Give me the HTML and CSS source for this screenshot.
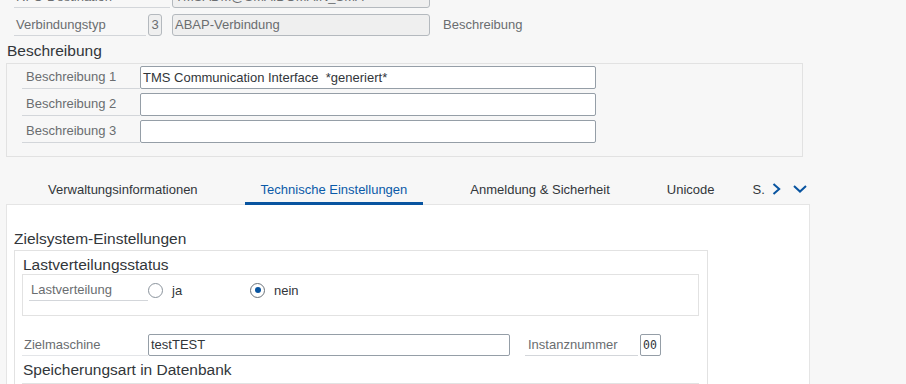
FILE: index.html
```html
<!DOCTYPE html>
<html lang="de">
<head>
<meta charset="utf-8">
<title>RFC-Destination</title>
<link rel="stylesheet" href="styles.css">
</head>
<body>
<div class="page">
  <div class="head-form">
    <div class="hrow">
      <span class="hlabel hlabel-wide">RFC-Destination</span>
      <span class="field field-ro field-dest">TMSADM@SMA.DOMAIN_SMA</span>
    </div>
    <div class="hrow">
      <span class="hlabel">Verbindungstyp</span>
      <span class="field field-ro field-code">3</span>
      <span class="field field-ro field-type">ABAP-Verbindung</span>
      <span class="hnote">Beschreibung</span>
    </div>
  </div>

  <h2 class="sec-title">Beschreibung</h2>
  <div class="desc-box">
    <div class="drow">
      <span class="dlabel">Beschreibung 1</span>
      <span class="field field-desc">TMS Communication Interface&nbsp; *generiert*</span>
    </div>
    <div class="drow">
      <span class="dlabel">Beschreibung 2</span>
      <span class="field field-desc"></span>
    </div>
    <div class="drow">
      <span class="dlabel">Beschreibung 3</span>
      <span class="field field-desc"></span>
    </div>
  </div>

  <div class="tabs">
    <span class="tab">Verwaltungsinformationen</span>
    <span class="tab tab-active">Technische Einstellungen</span>
    <span class="tab">Anmeldung &amp; Sicherheit</span>
    <span class="tab tab-near">Unicode</span>
    <span class="tab tab-clip">S.</span>
    <svg class="icon-next" width="9" height="12" viewBox="0 0 9 12"><path d="M1.5 1 L7.2 6 L1.5 11" fill="none" stroke="#0854a0" stroke-width="2"/></svg>
    <svg class="icon-more" width="14" height="8" viewBox="0 0 14 8"><path d="M1 1 L7 6.6 L13 1" fill="none" stroke="#0854a0" stroke-width="2"/></svg>
  </div>

  <div class="panel">
    <h3 class="panel-title">Zielsystem-Einstellungen</h3>
    <div class="group">
      <h4 class="group-title">Lastverteilungsstatus</h4>
      <div class="subbox">
        <div class="radio-row">
          <span class="rlabel">Lastverteilung</span>
          <span class="radio-opt"><span class="radio"></span>ja</span>
          <span class="radio-opt"><span class="radio radio-on"><span class="dot"></span></span>nein</span>
        </div>
      </div>
      <div class="host-row">
        <span class="zlabel">Zielmaschine</span>
        <span class="field field-host">testTEST</span>
        <span class="ilabel">Instanznummer</span>
        <span class="field field-inst">00</span>
      </div>
      <h4 class="group-title group-title-2">Speicherungsart in Datenbank</h4>
      <div class="subbox subbox-empty"></div>
    </div>
  </div>
</div>
</body>
</html>
```

FILE: styles.css
```css
html, body {
  margin: 0;
  padding: 0;
  background: #f7f7f7;
  overflow: hidden;
}

body {
  font-family: "Liberation Sans", Arial, sans-serif;
  font-size: 13px;
  color: #32363a;
}

.page {
  padding-left: 6px;
}

/* header form */
.head-form {
  margin-top: -14px;
  padding-left: 8px;
  display: flex;
  flex-direction: column;
  gap: 6px;
}

.hrow {
  display: flex;
  align-items: flex-start;
  height: 22px;
}

.hlabel {
  box-sizing: border-box;
  width: 132px;
  height: 22px;
  line-height: 21px;
  padding-left: 2px;
  color: #6a6d70;
  border-bottom: 1px solid #d3d6da;
  margin-right: 2px;
  white-space: nowrap;
}

.hlabel-wide {
  width: 156px;
}

.field {
  box-sizing: border-box;
  display: block;
  height: 22px;
  line-height: 20px;
  border: 1px solid #959ea7;
  border-radius: 2px;
  background: #fff;
  color: #32363a;
  padding-left: 2px;
  white-space: nowrap;
  overflow: hidden;
}

.field-ro {
  background: #efefef;
  border-color: #b4b9be;
  color: #6a6d70;
  border-radius: 3px;
}

.field-dest {
  width: 258px;
}

.field-code {
  width: 14px;
  padding-left: 0;
  text-align: center;
  margin-right: 10px;
}

.field-type {
  width: 258px;
  margin-right: 13px;
}

.hnote {
  line-height: 22px;
  color: #6a6d70;
}

/* Beschreibung */
.sec-title {
  margin: 6px 0 3px 1px;
  font-size: 15.5px;
  line-height: 18px;
  font-weight: normal;
  color: #32363a;
}

.desc-box {
  box-sizing: border-box;
  width: 797px;
  border: 1px solid #e2e2e2;
  padding: 2px 0 13px 15px;
  display: flex;
  flex-direction: column;
  gap: 4px;
}

.drow {
  display: flex;
  align-items: flex-start;
}

.dlabel {
  box-sizing: border-box;
  width: 118px;
  height: 23px;
  line-height: 22px;
  padding-left: 4px;
  color: #6a6d70;
  border-bottom: 1px solid #d3d6da;
}

.field-desc {
  width: 456px;
  height: 23px;
  line-height: 21px;
  padding-left: 2px;
}

/* tabs */
.tabs {
  position: relative;
  z-index: 1;
  display: flex;
  align-items: flex-start;
  margin-top: 25px;
  margin-bottom: -1px;
  padding-left: 26px;
}

.tab {
  padding: 0 16px 4px;
  line-height: 16px;
  border-bottom: 3px solid transparent;
  color: #32363a;
  white-space: nowrap;
}

.tab + .tab {
  margin-left: 31px;
}

.tabs .tab-near {
  margin-left: 25px;
}

.tab-active {
  color: #0a5aa8;
  border-bottom-color: #0854a0;
}

.tabs .tab-clip {
  margin-left: 22px;
  padding: 0 0 4px;
}

.icon-next {
  margin-left: 7px;
  margin-top: 1px;
}

.icon-more {
  margin-left: 12px;
  margin-top: 3px;
}

/* panel */
.panel {
  box-sizing: border-box;
  width: 804px;
  min-height: 240px;
  background: #fff;
  border: 1px solid #e5e5e5;
  padding: 25px 0 0 7px;
}

.panel-title {
  margin: 0 0 2px;
  font-size: 15.5px;
  line-height: 18px;
  font-weight: normal;
  color: #32363a;
}

.group {
  box-sizing: border-box;
  width: 694px;
  min-height: 160px;
  border: 1px solid #e2e2e2;
  padding: 5px 8px 0 7px;
}

.group-title {
  margin: 0;
  padding-left: 1px;
  font-size: 15.5px;
  line-height: 18px;
  font-weight: normal;
  color: #32363a;
}

.group-title-2 {
  margin: 5px 0 4px;
}

.subbox {
  border: 1px solid #e2e2e2;
  padding: 4px 0 14px 6px;
}

.subbox-empty {
  height: 40px;
}

.radio-row {
  display: flex;
  align-items: center;
}

.rlabel {
  box-sizing: border-box;
  width: 119px;
  height: 22px;
  line-height: 21px;
  padding-left: 2px;
  color: #6a6d70;
  border-bottom: 1px solid #d3d6da;
}

.radio-opt {
  display: inline-flex;
  align-items: center;
  gap: 9px;
  width: 102px;
  color: #32363a;
}

.radio {
  box-sizing: border-box;
  width: 15px;
  height: 15px;
  border: 1px solid #8a939c;
  border-radius: 50%;
  background: #fff;
  display: inline-flex;
  align-items: center;
  justify-content: center;
}

.radio-on {
  border-color: #6a7279;
}

.dot {
  width: 6px;
  height: 6px;
  border-radius: 50%;
  background: #0854a0;
}

.host-row {
  display: flex;
  align-items: flex-start;
  margin-top: 18px;
}

.zlabel {
  box-sizing: border-box;
  width: 126px;
  height: 22px;
  line-height: 21px;
  padding-left: 2px;
  color: #6a6d70;
  border-bottom: 1px solid #e3e5e8;
}

.field-host {
  width: 362px;
  margin-right: 15px;
}

.ilabel {
  box-sizing: border-box;
  width: 113px;
  height: 22px;
  line-height: 21px;
  padding-left: 3px;
  color: #6a6d70;
  border-bottom: 1px solid #d3d6da;
  margin-right: 2px;
}

.field-inst {
  width: 21px;
  padding-left: 2px;
  font-family: "DejaVu Sans Mono", "Liberation Mono", monospace;
  font-size: 11.5px;
  color: #32363a;
}
```
